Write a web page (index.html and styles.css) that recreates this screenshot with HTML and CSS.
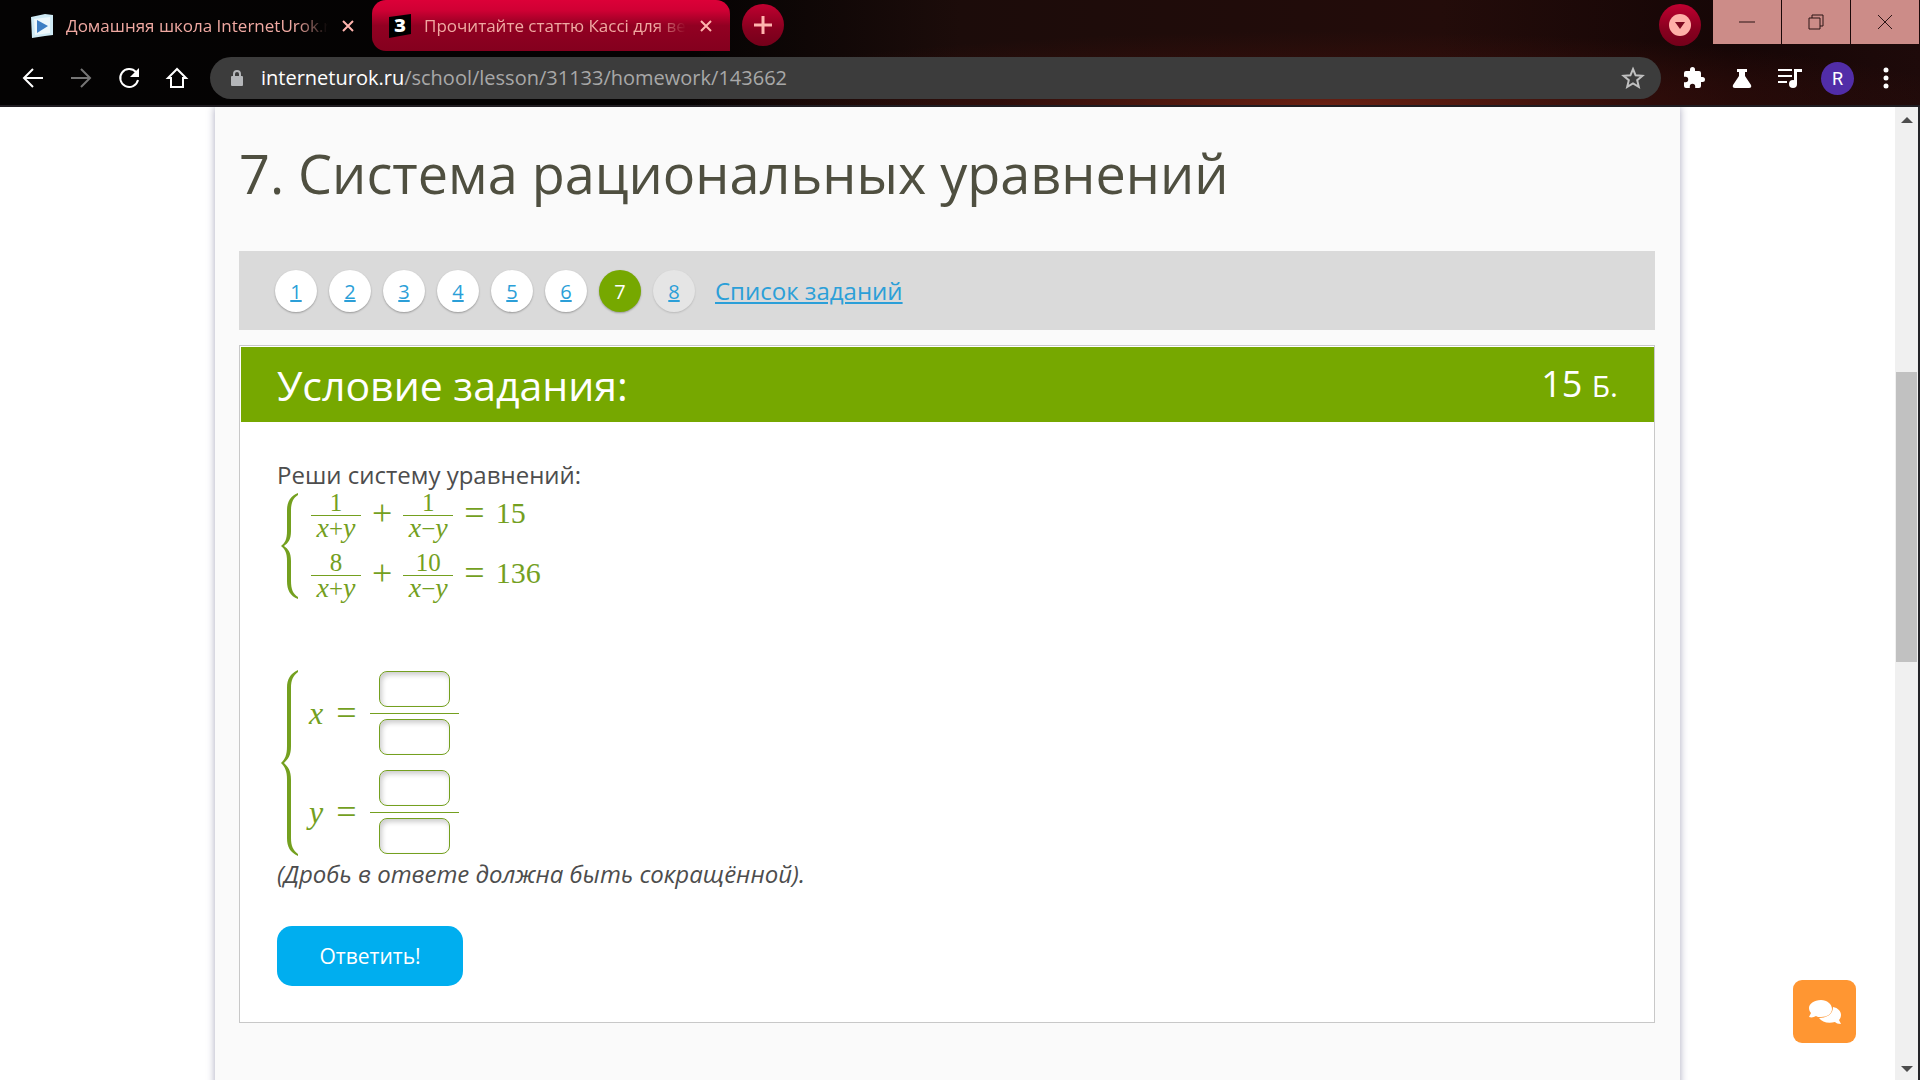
FILE: index.html
```html
<!DOCTYPE html>
<html lang="ru">
<head>
  <meta charset="UTF-8" />
  <title>7. Система рациональных уравнений</title>
  <meta name="viewport" content="width=device-width, initial-scale=1" />
  <link rel="stylesheet" href="styles.css">
</head>
<body>
  <!-- ===========================
       Browser frame
       =========================== -->
  <header class="browser">
    <div class="tab-strip">
      <div class="tab">
        <svg class="tab-icon" viewBox="0 0 22 24">
          <path d="M0 3 14 0l8 1v20l-8 1-13 2z" fill="#cfeaf5" />
          <path d="M3 5 19 3v16L4 21z" fill="#eef8fc" />
          <path d="M6 6l11 6-11 7z" fill="#3f7fc4" />
        </svg>
        <span class="tab-title">Домашняя школа InternetUrok.ru</span>
        <button class="tab-close" aria-label="Закрыть вкладку">
          <svg viewBox="0 0 14 14"><path d="M2 2l10 10M12 2L2 12" /></svg>
        </button>
      </div>
      <div class="tab active">
        <svg class="tab-icon" viewBox="0 0 22 24">
          <path d="M0 3 22 0v20L0 24z" fill="#000" />
          <text x="11" y="18" class="tab-icon-text">З</text>
        </svg>
        <span class="tab-title">Прочитайте статтю Кассі для вебсайту</span>
        <button class="tab-close" aria-label="Закрыть вкладку">
          <svg viewBox="0 0 14 14"><path d="M2 2l10 10M12 2L2 12" /></svg>
        </button>
      </div>
      <button class="round-btn new-tab" aria-label="Новая вкладка">
        <svg viewBox="0 0 42 42"><path d="M21 12v18M12 21h18" stroke="#ffb4ae" stroke-width="3" /></svg>
      </button>
      <button class="round-btn tab-search" aria-label="Поиск вкладок">
        <svg viewBox="0 0 42 42">
          <circle cx="21" cy="21" r="11" fill="#ffb0a8" />
          <path d="M16 18h10l-5 7z" fill="#7d0a20" />
        </svg>
      </button>
      <div class="window-controls">
        <button aria-label="Свернуть"><svg viewBox="0 0 16 16"><path d="M0 8h16" /></svg></button>
        <button aria-label="Восстановить"><svg viewBox="0 0 16 16"><path d="M1 4h11v11H1zM4 4V1h11v11h-3" /></svg></button>
        <button aria-label="Закрыть"><svg viewBox="0 0 16 16"><path d="M1 1l14 14M15 1L1 15" /></svg></button>
      </div>
    </div>

    <div class="toolbar">
      <button class="tool" aria-label="Назад">
        <svg viewBox="0 0 24 24"><path d="M22 12H4M12 3l-9 9 9 9" class="line" /></svg>
      </button>
      <button class="tool disabled" aria-label="Вперёд">
        <svg viewBox="0 0 24 24"><path d="M2 12h18M12 3l9 9-9 9" class="line" /></svg>
      </button>
      <button class="tool" aria-label="Обновить">
        <svg viewBox="0 0 24 24">
          <path d="M19 6A9 9 0 1 0 21 14" class="line" />
          <path d="M22 2v9h-9z" />
        </svg>
      </button>
      <button class="tool" aria-label="Домой">
        <svg viewBox="0 0 24 24"><path d="M12 3l-9 9h3v9h12v-9h3z" class="line" /></svg>
      </button>

      <div class="omnibox">
        <svg class="lock" viewBox="0 0 14 18">
          <path d="M4 8V5a3 3 0 0 1 6 0v3" fill="none" stroke="#b4b6b9" stroke-width="2" />
          <rect x="1" y="7" width="12" height="10" rx="1" fill="#b4b6b9" />
        </svg>
        <div class="url"><span class="host">interneturok.ru</span>/school/lesson/31133/homework/143662</div>
        <button class="star" aria-label="Добавить в закладки">
          <svg viewBox="0 0 24 24"><path d="M12 3l2.600 6.300 6.800.5-5.200 4.400 1.600 6.600-5.800-3.500-5.800 3.500 1.600-6.600-5.200-4.400 6.800-.5z" /></svg>
        </button>
      </div>

      <button class="tool ext" aria-label="Расширения">
        <svg viewBox="0 0 24 24"><path d="M20.500 11H19V7a2 2 0 0 0-2-2h-4V3.500a2.500 2.500 0 0 0-5 0V5H4a2 2 0 0 0-2 2v3.800h1.500a2.700 2.700 0 0 1 0 5.400H2V20a2 2 0 0 0 2 2h3.800v-1.500a2.700 2.700 0 0 1 5.400 0V22H17a2 2 0 0 0 2-2v-4h1.500a2.500 2.500 0 0 0 0-5z" /></svg>
      </button>
      <button class="tool ext" aria-label="Эксперименты">
        <svg viewBox="0 0 24 24"><path d="M7 3h10v3h-2v4l6 9q1 3-2 3H5q-3 0-2-3l6-9V6H7z" /></svg>
      </button>
      <button class="tool ext" aria-label="Управление медиа">
        <svg viewBox="0 0 24 24">
          <path d="M0 3h14v2H0zM0 9h14v2H0zM0 15h9v2H0zM16 3h8v3h-5v12h-3z" />
          <circle cx="15" cy="18" r="4" />
        </svg>
      </button>
      <button class="avatar" aria-label="Профиль">R</button>
      <button class="tool ext" aria-label="Меню">
        <svg viewBox="0 0 24 24">
          <circle cx="12" cy="4" r="2.500" /><circle cx="12" cy="12" r="2.500" /><circle cx="12" cy="20" r="2.500" />
        </svg>
      </button>
    </div>
  </header>

  <!-- ===========================
       Lesson page
       =========================== -->
  <div class="viewport">
    <div class="page">
      <main class="content">
        <h1>7. Система рациональных уравнений</h1>

        <nav class="task-nav">
          <a class="task" href="#">1</a>
          <a class="task" href="#">2</a>
          <a class="task" href="#">3</a>
          <a class="task" href="#">4</a>
          <a class="task" href="#">5</a>
          <a class="task" href="#">6</a>
          <span class="task current">7</span>
          <a class="task locked" href="#">8</a>
          <a class="task-list" href="#">Список заданий</a>
        </nav>

        <section class="card">
          <div class="card-header">
            <h2>Условие задания:</h2>
            <div class="points">15 <small>Б.</small></div>
          </div>

          <form class="card-body">
            <p>Реши систему уравнений:</p>

            <!-- given system -->
            <div class="system given">
              <svg class="brace" viewBox="0 0 17 106"><path d="M17 0C9 3 6 9 6 18V38C6 46 4 50 0 53C4 56 6 60 6 68V88C6 97 9 103 17 106V104C12 101 10 96 10 88V68C10 59 7 56 3 53C7 50 10 47 10 38V18C10 10 12 5 17 2Z" /></svg>
              <div class="rows">
                <div class="row">
                  <span class="frac"><span>1</span><span><i>x</i>+<i>y</i></span></span>
                  <span class="op">+</span>
                  <span class="frac"><span>1</span><span><i>x</i>−<i>y</i></span></span>
                  <span class="op">=</span>
                  <span class="value">15</span>
                </div>
                <div class="row">
                  <span class="frac"><span>8</span><span><i>x</i>+<i>y</i></span></span>
                  <span class="op">+</span>
                  <span class="frac"><span>10</span><span><i>x</i>−<i>y</i></span></span>
                  <span class="op">=</span>
                  <span class="value">136</span>
                </div>
              </div>
            </div>

            <!-- answer fields -->
            <div class="system answer">
              <svg class="brace" viewBox="0 0 17 186"><path d="M17 0C9 4 6 9 6 18V76C6 85 4 89 0 93C4 97 6 101 6 110V168C6 177 9 182 17 186V184C12 180 10 176 10 168V110C10 100 7 97 3 93C7 89 10 86 10 76V18C10 10 12 6 17 2Z" /></svg>
              <div class="rows">
                <div class="row">
                  <i>x</i>
                  <span class="op">=</span>
                  <span class="frac">
                    <input type="text" aria-label="x, числитель" />
                    <input type="text" aria-label="x, знаменатель" />
                  </span>
                </div>
                <div class="row">
                  <i>y</i>
                  <span class="op">=</span>
                  <span class="frac">
                    <input type="text" aria-label="y, числитель" />
                    <input type="text" aria-label="y, знаменатель" />
                  </span>
                </div>
              </div>
            </div>

            <p><em>(Дробь в ответе должна быть сокращённой).</em></p>
            <button type="button" class="submit-btn">Ответить!</button>
          </form>
        </section>
      </main>

      <button class="chat-btn" aria-label="Чат">
        <svg viewBox="0 0 32 24">
          <path d="M24 7c5 1 8 4 8 8 0 2-1 4-2 5l2 4c-3 0-5-1-6-2-7 2-13 0-16-4 8 0 14-4 14-11z" />
          <path d="M12 0c6 0 11 4 11 9s-5 8-11 8c-2 0-4 0-5-1-2 1-4 2-7 1l2-4C1 12 0 10 0 8 0 4 5 0 12 0z" />
        </svg>
      </button>
    </div>

    <div class="scrollbar">
      <svg viewBox="0 0 12 6"><path d="M6 0l6 6H0z" /></svg>
      <div class="track"><div class="thumb"></div></div>
      <svg viewBox="0 0 12 6"><path d="M0 0h12L6 6z" /></svg>
    </div>
  </div>
</body>
</html>
```
FILE: styles.css
```css
/* -----------------------------------------------
   1. Reset
   ----------------------------------------------- */
* {
  margin: 0;
  padding: 0;
  box-sizing: border-box;
}

body {
  height: 100vh;
  display: flex;
  flex-direction: column;
  overflow: hidden;
  font-family: "Open Sans", sans-serif;
  font-size: 24px;
  line-height: 36px;
  color: #4d4d4d;
  background: #ffffff;
}

button {
  border: none;
  background: none;
  font-family: inherit;
  cursor: pointer;
}

svg {
  display: block;
}

/* -----------------------------------------------
   2. Browser frame
   ----------------------------------------------- */
.browser {
  flex: none;
  border-bottom: 2px solid #201d22;
  background:
    radial-gradient(ellipse 34% 70% at 69% 100%, #6b2113 0%, rgba(60, 16, 12, 0.6) 50%, transparent 100%),
    linear-gradient(90deg, #040303 0%, #050303 36%, #1c0c0a 50%, #230c0a 75%, #160606 90%, #1e0a0a 100%);
}

.tab-strip {
  display: flex;
  align-items: flex-start;
  height: 51px;
  padding: 0 1px 0 14px;
}

.tab {
  display: flex;
  align-items: center;
  width: 358px;
  height: 51px;
  padding: 0 17px;
  gap: 13px;
  color: #f0a9a2;
}
.tab.active {
  background: linear-gradient(#dc0038 0%, #d00034 20%, #920022 50%, #84001e 100%);
  border-radius: 14px 14px 0 14px;
}

.tab-icon {
  flex: none;
  width: 22px;
  height: 24px;
}
.tab-icon-text {
  font-size: 18px;
  font-weight: 800;
  fill: #ffffff;
  text-anchor: middle;
}

.tab-title {
  flex: 1;
  overflow: hidden;
  white-space: nowrap;
  font-size: 17px;
  -webkit-mask-image: linear-gradient(90deg, #000 88%, transparent);
  mask-image: linear-gradient(90deg, #000 88%, transparent);
}

.tab-close svg {
  width: 14px;
  height: 14px;
  fill: none;
  stroke: #ffb4ae;
  stroke-width: 2;
}

.round-btn {
  width: 42px;
  height: 42px;
  margin-top: 4px;
  border-radius: 50%;
  background: linear-gradient(#c00030, #88001f 60%, #74001a);
}
.new-tab {
  margin-left: 12px;
}
.tab-search {
  margin-left: auto;
  margin-right: 12px;
}

.window-controls {
  display: flex;
  gap: 1px;
}
.window-controls button {
  width: 68px;
  height: 44px;
  background: #cc8c88;
}
.window-controls svg {
  width: 16px;
  height: 16px;
  margin: 0 auto;
  fill: none;
  stroke: #2b1414;
  stroke-width: 1;
}

/* toolbar */
.toolbar {
  display: flex;
  align-items: center;
  height: 54px;
  padding: 0 22px 0 21px;
}

.tool {
  width: 24px;
  height: 24px;
  margin-right: 24px;
}
.tool svg {
  width: 24px;
  height: 24px;
  fill: #ffffff;
}
.tool .line {
  fill: none;
  stroke: #ffffff;
  stroke-width: 2;
}
.tool.disabled {
  opacity: 0.45;
}

.omnibox {
  flex: 1;
  display: flex;
  align-items: center;
  height: 42px;
  margin: 0 21px 0 -3px;
  padding: 0 16px 0 20px;
  border-radius: 21px;
  background: #3c3c3c;
}
.lock {
  width: 14px;
  height: 18px;
}
.url {
  flex: 1;
  margin-left: 17px;
  font-size: 20px;
  color: #a8a8a8;
}
.url .host {
  color: #ffffff;
}
.star svg {
  width: 24px;
  height: 24px;
  fill: none;
  stroke: #c0c0c0;
  stroke-width: 2;
}

.avatar {
  width: 33px;
  height: 33px;
  margin: 0 20px 0 -5px;
  border-radius: 50%;
  background: #512da8;
  color: #ffffff;
  font-family: Roboto, sans-serif;
  font-size: 18px;
}
.tool.ext:last-child {
  margin-right: 0;
}

/* -----------------------------------------------
   3. Viewport and scrollbar
   ----------------------------------------------- */
.viewport {
  flex: 1;
  min-height: 0;
  display: flex;
  border-right: 2px solid #242428;
}

.page {
  flex: 1;
  position: relative;
  overflow: hidden;
}

.scrollbar {
  width: 23px;
  display: flex;
  flex-direction: column;
  align-items: center;
  padding: 10px 0 8px;
  background: #f0f0f0;
}
.scrollbar svg {
  width: 12px;
  height: 6px;
  fill: #4d4d4d;
}
.track {
  flex: 1;
  width: 21px;
  margin: 7px 0;
}
.thumb {
  height: 290px;
  margin-top: 242px;
  background: #c1c1c1;
}

/* -----------------------------------------------
   4. Content column
   ----------------------------------------------- */
.content {
  max-width: 1465px;
  min-height: 100%;
  margin: 0 auto;
  padding: 30px 25px 80px 24px;
  background: #fafafa;
  box-shadow: 0 0 8px rgba(40, 40, 90, 0.4);
}

h1 {
  margin-bottom: 42px;
  font-size: 54px;
  font-weight: 400;
  line-height: 72px;
  color: #4f4f40;
}

.task-nav {
  display: flex;
  align-items: center;
  gap: 12px;
  padding: 19px 36px 18px;
  margin-bottom: 15px;
  background: #dadada;
}
.task-nav a {
  color: #2b9fd8;
}
.task {
  width: 42px;
  height: 42px;
  border-radius: 50%;
  background: #ffffff;
  box-shadow: 0 1px 2px rgba(0, 0, 0, 0.3);
  font-size: 20px;
  line-height: 44px;
  text-align: center;
}
.task.current {
  background: #76a800;
  color: #ffffff;
}
.task.locked {
  background: #e5e5e5;
  box-shadow: 0 1px 2px rgba(0, 0, 0, 0.15);
}
.task-list {
  margin-left: 8px;
}

/* -----------------------------------------------
   5. Task card
   ----------------------------------------------- */
.card {
  padding: 1px 0 0 1px;
  border: 1px solid #c8c8c8;
  background: #ffffff;
}

.card-header {
  display: flex;
  align-items: center;
  justify-content: space-between;
  height: 75px;
  padding: 0 36px;
  background: #76a800;
  color: #ffffff;
}
.card-header h2 {
  font-size: 41px;
  font-weight: 400;
}
.points {
  font-size: 36px;
}
.points small {
  font-size: 30px;
}

.card-body {
  padding: 35px 36px 36px;
}

.submit-btn {
  display: block;
  width: 186px;
  height: 60px;
  margin-top: 34px;
  border-radius: 15px;
  background: #00aeef;
  color: #ffffff;
  font-size: 21px;
}

/* -----------------------------------------------
   6. Formulas
   ----------------------------------------------- */
.system {
  display: flex;
  gap: 11px;
  padding-left: 4px;
  font-family: "Liberation Serif", serif;
  font-size: 30px;
  color: #74a01f;
}
.brace {
  flex: none;
  width: 17px;
  fill: #74a01f;
}
.rows {
  display: flex;
  flex-direction: column;
}
.row {
  display: flex;
  align-items: center;
}
.op {
  font-size: 36px;
}
.frac {
  display: flex;
  flex-direction: column;
  align-items: center;
}

.given {
  margin-bottom: 70px;
}
.given .brace {
  height: 106px;
}
.given .rows {
  gap: 13px;
  padding-left: 2px;
}
.given .row {
  align-items: flex-start;
  gap: 11px;
  height: 47px;
}
.given .op,
.given .value {
  line-height: 40px;
}
.given .frac {
  width: 50px;
  font-size: 25px;
  line-height: 24px;
}
.given .frac i {
  font-size: 28px;
}
.given .frac span:first-child {
  width: 50px;
  height: 23px;
  border-bottom: 1px solid #74a01f;
  line-height: 20px;
  text-align: center;
}

.answer .brace {
  height: 186px;
}
.answer .rows {
  gap: 15px;
  padding-top: 1px;
}
.answer .row {
  gap: 13px;
}
.answer i {
  font-size: 32px;
}
.answer .frac {
  padding: 0 9px;
  background: linear-gradient(#74a01f, #74a01f) center / 100% 1px no-repeat;
  gap: 12px;
}
.answer input {
  width: 71px;
  height: 36px;
  padding: 0 6px;
  border: 1px solid #74a01f;
  border-radius: 8px;
  background: #ffffff;
  box-shadow: inset 2px 3px 5px rgba(0, 0, 0, 0.2);
  font-size: 24px;
}

/* -----------------------------------------------
   7. Chat button
   ----------------------------------------------- */
.chat-btn {
  position: absolute;
  right: 39px;
  bottom: 37px;
  width: 63px;
  height: 63px;
  border-radius: 9px;
  background: #ff9632;
}
.chat-btn svg {
  width: 32px;
  height: 24px;
  margin: 0 auto;
  fill: #ffffff;
}
```
